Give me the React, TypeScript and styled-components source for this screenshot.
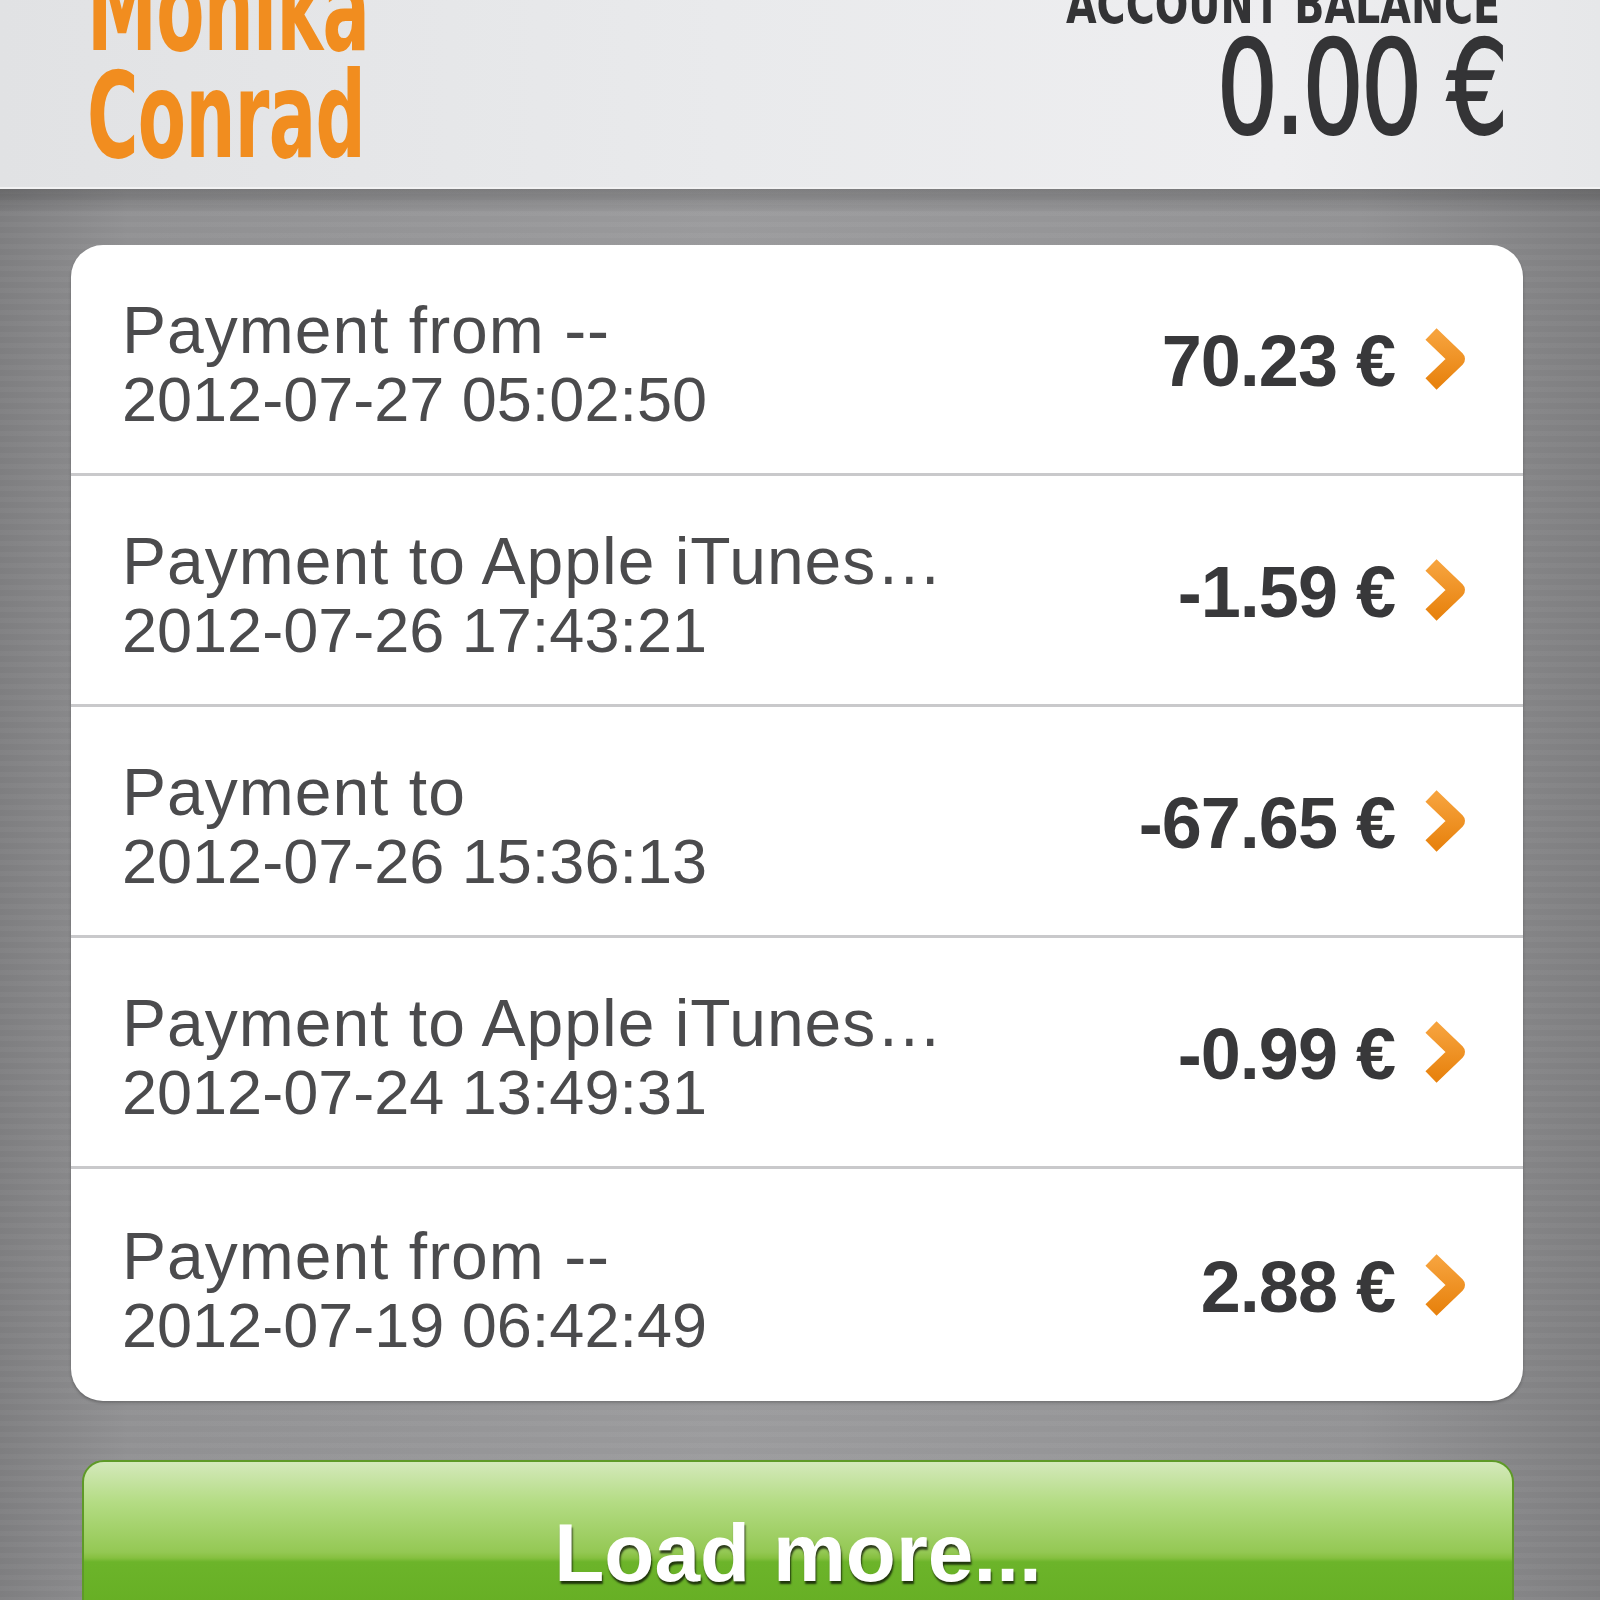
import React from "react";
import styled, { createGlobalStyle } from "styled-components";

type Tx = { title: string; date: string; amount: string };

const transactions: Tx[] = [
  { title: "Payment from --", date: "2012-07-27 05:02:50", amount: "70.23 €" },
  { title: "Payment to Apple iTunes…", date: "2012-07-26 17:43:21", amount: "-1.59 €" },
  { title: "Payment to", date: "2012-07-26 15:36:13", amount: "-67.65 €" },
  { title: "Payment to Apple iTunes…", date: "2012-07-24 13:49:31", amount: "-0.99 €" },
  { title: "Payment from --", date: "2012-07-19 06:42:49", amount: "2.88 €" },
];

const Chevron = () => (
  <svg width="48" height="66" viewBox="0 0 48 66">
    <defs>
      <linearGradient id="chev" x1="0" y1="0" x2="0" y2="1">
        <stop offset="0" stopColor="#f6a23c" />
        <stop offset="1" stopColor="#e8830f" />
      </linearGradient>
    </defs>
    <polyline
      points="10,8 36,33 10,58"
      fill="none"
      stroke="url(#chev)"
      strokeWidth="16"
      strokeLinejoin="round"
    />
  </svg>
);

const App = () => {
  return (
    <>
      <GlobalStyle />
      <Screen>
        <Header>
          <Name>
            <NameLine>Monika</NameLine>
            <NameLine>Conrad</NameLine>
          </Name>
          <Balance>
            <BalanceLabel>ACCOUNT BALANCE</BalanceLabel>
            <BalanceValue>0.00 €</BalanceValue>
          </Balance>
        </Header>
        <Body>
          <Card>
            {transactions.map((tx, i) => (
              <Row key={i} last={i === transactions.length - 1}>
                <RowText>
                  <RowTitle>{tx.title}</RowTitle>
                  <RowDate>{tx.date}</RowDate>
                </RowText>
                <Amount>{tx.amount}</Amount>
                <ChevronWrap>
                  <Chevron />
                </ChevronWrap>
              </Row>
            ))}
          </Card>
          <LoadMore>Load more...</LoadMore>
        </Body>
      </Screen>
    </>
  );
};

export default App;

const GlobalStyle = createGlobalStyle`
  html, body {
    margin: 0;
    padding: 0;
    background: #8f8f91;
  }
  * {
    box-sizing: border-box;
  }
`;
const Screen = styled.div`
  width: 1600px;
  height: 1600px;
  overflow: hidden;
  display: flex;
  flex-direction: column;
  font-family: "Liberation Sans", Arial, sans-serif;
`;
const Header = styled.div`
  height: 189px;
  flex-shrink: 0;
  display: flex;
  flex-direction: row;
  justify-content: space-between;
  align-items: flex-start;
  padding: 0 95px 0 87px;
  background: linear-gradient(to right, #e1e2e4 0%, #e9eaec 45%, #eeeef0 80%, #e6e7e9 100%);
  border-bottom: 2px solid #f2f2f3;
  overflow: hidden;
`;
const Name = styled.div`
  margin-top: -45px;
  display: flex;
  flex-direction: column;
  transform: scaleX(0.65);
  transform-origin: left top;
`;
const NameLine = styled.div`
  font-family: "DejaVu Sans Condensed", "DejaVu Sans", sans-serif;
  font-weight: 700;
  font-size: 120px;
  line-height: 107px;
  color: #f18d1f;
  letter-spacing: -1px;
`;
const Balance = styled.div`
  margin-top: -24px;
  display: flex;
  flex-direction: column;
  align-items: flex-end;
  transform: scaleX(0.83);
  transform-origin: right top;
`;
const BalanceLabel = styled.div`
  font-family: "DejaVu Sans Condensed", "DejaVu Sans", sans-serif;
  font-weight: 700;
  font-size: 53px;
  line-height: 57px;
  color: #333335;
  margin-right: 6px;
`;
const BalanceValue = styled.div`
  font-family: "DejaVu Sans Condensed", "DejaVu Sans", sans-serif;
  font-weight: 400;
  font-size: 130px;
  line-height: 110px;
  color: #343436;
  letter-spacing: -4px;
  -webkit-text-stroke: 2px #343436;
`;
const Body = styled.div`
  flex: 1;
  display: flex;
  flex-direction: column;
  gap: 59px;
  padding: 56px 0 0 0;
  background:
    linear-gradient(to bottom, rgba(0, 0, 0, 0.2) 0px, rgba(0, 0, 0, 0) 24px),
    repeating-linear-gradient(
      to bottom,
      rgba(255, 255, 255, 0.015) 0px,
      rgba(255, 255, 255, 0.015) 5px,
      rgba(0, 0, 0, 0.015) 5px,
      rgba(0, 0, 0, 0.015) 11px
    ),
    linear-gradient(to right, #808082 0%, #929294 8%, #9c9c9e 45%, #949496 85%, #808082 100%);
`;
const Card = styled.div`
  margin: 0 77px 0 71px;
  background: #ffffff;
  border-radius: 32px;
  overflow: hidden;
  display: flex;
  flex-direction: column;
  box-shadow: 0 2px 3px rgba(0, 0, 0, 0.25);
`;
const Row = styled.div<{ last?: boolean }>`
  height: ${(p) => (p.last ? "232px" : "231px")};
  display: flex;
  flex-direction: row;
  align-items: center;
  padding: 0 54px 0 51px;
  border-bottom: ${(p) => (p.last ? "none" : "3px solid #c9c9cb")};
`;
const RowText = styled.div`
  flex: 1;
  display: flex;
  flex-direction: column;
  padding-top: 12px;
  color: #4b4b4d;
  line-height: 69px;
`;
const RowTitle = styled.div`
  white-space: nowrap;
  font-size: 66px;
  letter-spacing: 1px;
`;
const RowDate = styled.div`
  white-space: nowrap;
  font-size: 63px;
`;
const Amount = styled.div`
  font-size: 72px;
  line-height: 72px;
  font-weight: 700;
  color: #38383a;
  letter-spacing: -1px;
  margin-top: 4px;
`;
const ChevronWrap = styled.div`
  margin-left: 26px;
  display: flex;
  align-items: center;
`;
const LoadMore = styled.div`
  margin: 0 86px 0 82px;
  height: 220px;
  flex-shrink: 0;
  border-radius: 22px;
  border: 2px solid #5e9a27;
  padding-top: 50px;
  text-align: center;
  font-size: 82px;
  line-height: 82px;
  font-weight: 700;
  color: #ffffff;
  text-shadow: 1px 3px 2px rgba(0, 0, 0, 0.7);
  background: linear-gradient(
    to bottom,
    #d4e9bb 0px,
    #b4dc84 40px,
    #94c854 90px,
    #86c040 96px,
    #6cb42a 100px,
    #64ad22 160px
  );
`;
